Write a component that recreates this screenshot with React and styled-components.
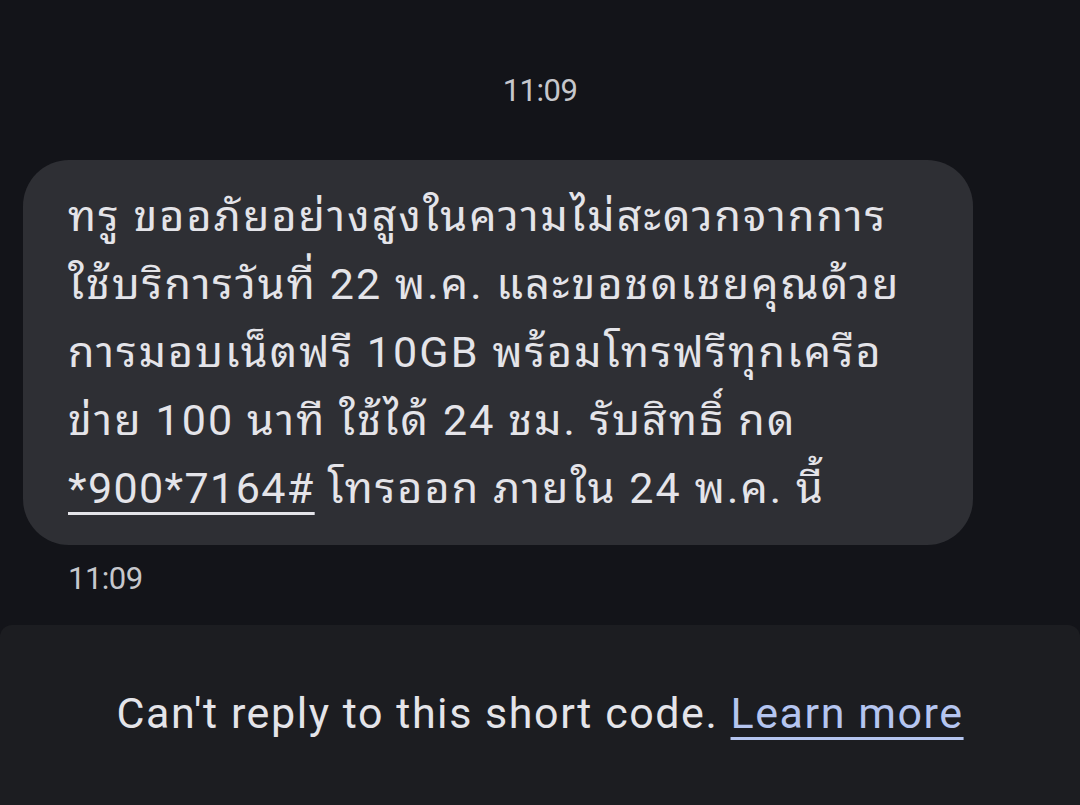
import React from "react";
import styled, { createGlobalStyle } from "styled-components";

const Global = createGlobalStyle`
  html, body { margin: 0; padding: 0; background: #131419; }
  body { font-family: "Roboto", "Noto Sans Thai Looped", "Noto Sans Thai UI", "Loma", "Garuda", "Noto Sans Thai", "Noto Sans", sans-serif; }
  #root { min-height: 805px; }
`;

const Screen = styled.div`
  width: 1080px;
  height: 805px;
  background: #131419;
  display: flex;
  flex-direction: column;
  overflow: hidden;
`;

const Thread = styled.div`
  flex: 1;
  display: flex;
  flex-direction: column;
  padding: 72px 0 0 23px;
`;

const DateStamp = styled.div`
  align-self: center;
  margin-left: -23px;
  font-size: 31px;
  line-height: 38px;
  color: #c6c7cc;
  letter-spacing: -0.5px;
`;

const Bubble = styled.div`
  margin-top: 50px;
  width: 950px;
  box-sizing: border-box;
  background: #2e2f34;
  border-radius: 46px;
  padding: 22px 40px 23px 45px;
  color: #e4e4e9;
  font-size: 43px;
  line-height: 68px;
  letter-spacing: 2.1px;
  white-space: nowrap;
`;

const Line = styled.div``;

const Code = styled.span`
  letter-spacing: 1.4px;
  text-decoration: underline;
  text-decoration-thickness: 3px;
  text-underline-offset: 9px;
`;

const Time = styled.div`
  margin: 16px 0 0 45px;
  font-size: 31px;
  line-height: 36px;
  color: #c6c7cc;
  letter-spacing: -0.5px;
`;

const Footer = styled.div`
  height: 180px;
  background: #1c1d21;
  border-radius: 12px 12px 0 0;
  display: flex;
  align-items: center;
  justify-content: center;
  padding-bottom: 4px;
  box-sizing: border-box;
`;

const Notice = styled.p`
  margin: 0;
  font-size: 43px;
  color: #e4e4e9;
  letter-spacing: 1.55px;
`;

const Link = styled.a`
  color: #b5c5f0;
  text-decoration: underline;
  text-decoration-thickness: 3px;
  text-underline-offset: 9px;
`;

const lines = [
  "ทรู ขออภัยอย่างสูงในความไม่สะดวกจากการ",
  "ใช้บริการวันที่ 22 พ.ค. และขอชดเชยคุณด้วย",
  "การมอบเน็ตฟรี 10GB พร้อมโทรฟรีทุกเครือ",
  "ข่าย 100 นาที ใช้ได้ 24 ชม. รับสิทธิ์ กด",
];

export default function App() {
  return (
    <>
      <Global />
      <Screen>
        <Thread>
          <DateStamp>11:09</DateStamp>
          <Bubble>
            {lines.map((l) => (
              <Line key={l}>{l}</Line>
            ))}
            <Line>
              <Code>*900*7164#</Code> โทรออก ภายใน 24 พ.ค. นี้
            </Line>
          </Bubble>
          <Time>11:09</Time>
        </Thread>
        <Footer>
          <Notice>
            Can't reply to this short code. <Link href="#">Learn more</Link>
          </Notice>
        </Footer>
      </Screen>
    </>
  );
}
